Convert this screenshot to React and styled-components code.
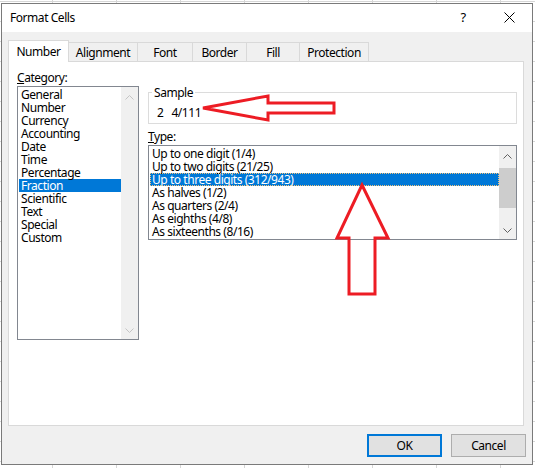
import React from 'react';
import styled, { createGlobalStyle } from 'styled-components';

const Global = createGlobalStyle`
  html, body { margin: 0; padding: 0; }
  body { width: 535px; height: 468px; overflow: hidden; background: #fff; }
`;

const CATEGORIES = ['General', 'Number', 'Currency', 'Accounting', 'Date', 'Time', 'Percentage', 'Fraction', 'Scientific', 'Text', 'Special', 'Custom'];
const TYPES = ['Up to one digit (1/4)', 'Up to two digits (21/25)', 'Up to three digits (312/943)', 'As halves (1/2)', 'As quarters (2/4)', 'As eighths (4/8)', 'As sixteenths (8/16)'];
const TABS = [
  { label: 'Number', w: 61 },
  { label: 'Alignment', w: 70 },
  { label: 'Font', w: 56 },
  { label: 'Border', w: 55 },
  { label: 'Fill', w: 54 },
  { label: 'Protection', w: 70 },
];

const Page = styled.div`
  position: relative;
  width: 535px;
  height: 468px;
  box-sizing: border-box;
  padding: 3px 0 0 1px;
  background-color: #fff;
  background-image:
    linear-gradient(to right, #d6d6d6 1px, transparent 1px),
    linear-gradient(to bottom, #d6d6d6 1px, transparent 1px);
  background-size: 64px 20px;
  background-position: 52px 1px;
`;

const Dialog = styled.div`
  width: 532px;
  height: 462px;
  box-sizing: border-box;
  border: 1px solid #7a7a7a;
  background: #f0f0f0;
  display: flex;
  flex-direction: column;
  font-family: "Noto Sans", sans-serif;
  font-size: 12px;
  letter-spacing: -0.45px;
  color: #000;
`;

const TitleBar = styled.div`
  height: 28px;
  background: #fff;
  display: flex;
  align-items: center;
  padding-left: 8px;
`;

const Title = styled.div`
  flex: 1;
  line-height: 15px;
  margin-top: -2px;
`;

const CaptionButton = styled.div`
  width: 46px;
  height: 28px;
  display: flex;
  align-items: center;
  justify-content: center;
  font-size: 13px;
  margin-top: -2px;
`;

const Client = styled.div`
  flex: 1;
  display: flex;
  flex-direction: column;
  padding: 8px 6px 7px 6px;
`;

const TabRow = styled.div`
  display: flex;
  align-items: flex-end;
  height: 22px;
  margin-bottom: -1px;
  position: relative;
  z-index: 1;
`;

const Tab = styled.div`
  box-sizing: border-box;
  width: ${p => p.$w}px;
  height: ${p => (p.$active ? 22 : 19)}px;
  margin-bottom: ${p => (p.$active ? 0 : 1)}px;
  margin-left: -1px;
  &:first-child { margin-left: 0; }
  border: 1px solid #d9d9d9;
  border-bottom: none;
  background: ${p => (p.$active ? '#fff' : '#f0f0f0')};
  display: flex;
  align-items: center;
  justify-content: center;
  padding-top: ${p => (p.$active ? 0 : 1)}px;
  position: relative;
  z-index: ${p => (p.$active ? 2 : 1)};
`;

const Panel = styled.div`
  width: 516px;
  height: 365px;
  box-sizing: border-box;
  border: 1px solid #d9d9d9;
  background: #fff;
  display: grid;
  grid-template-columns: 122px 369px;
  column-gap: 9px;
  align-items: start;
  padding: 8px 0 0 8px;
`;

const Column = styled.div`
  display: flex;
  flex-direction: column;
  padding-top: ${p => p.$top || 0}px;
`;

const Label = styled.div`
  height: 15px;
  line-height: 15px;
  margin-top: ${p => p.$mt || 0}px;
`;

const ListBox = styled.div`
  box-sizing: border-box;
  height: ${p => p.$h}px;
  margin-top: 1px;
  border: 1px solid #828790;
  background: #fff;
  display: flex;
`;

const Items = styled.div`
  flex: 1;
  padding: 1px 0 0 1px;
  min-width: 0;
`;

const Item = styled.div`
  height: 13px;
  line-height: 13px;
  padding-left: 2px;
  white-space: nowrap;
  background: ${p => (p.$sel ? '#0078d7' : 'transparent')};
  color: ${p => (p.$sel ? '#fff' : '#000')};
  ${p => p.$focus && 'outline: 1px dotted #f3c27a; outline-offset: -1px;'}
`;

const ScrollBar = styled.div`
  width: 17px;
  background: #f0f0f0;
  display: flex;
  flex-direction: column;
`;

const ScrollButton = styled.div`
  height: 17px;
  display: flex;
  justify-content: center;
  align-items: center;
  padding-top: ${p => (p.$up ? 3 : 0)}px;
  box-sizing: border-box;
  color: ${p => (p.$disabled ? '#c4c4c4' : '#606060')};
`;

const Track = styled.div`
  flex: 1;
`;

const Thumb = styled.div`
  height: 40px;
  margin-top: 5px;
  background: #cdcdcd;
`;

const Group = styled.fieldset`
  margin: 0;
  padding: 5px 0 3px 3px;
  border: 1px solid #dcdcdc;
  min-width: 0;
`;

const Legend = styled.legend`
  padding: 0 2px;
  line-height: 15px;
`;

const SampleValue = styled.div`
  padding-left: 5px;
  line-height: 15px;
  white-space: pre;
`;

const Footer = styled.div`
  margin-top: 8px;
  display: flex;
  justify-content: flex-end;
  gap: 9px;
`;

const Button = styled.button`
  width: 75px;
  height: 23px;
  box-sizing: border-box;
  padding: 0;
  background: #e1e1e1;
  border: ${p => (p.$default ? '2px solid #0078d7' : '1px solid #adadad')};
  font: inherit;
  letter-spacing: inherit;
  color: #000;
`;

const Overlay = styled.svg`
  position: absolute;
  left: 0;
  top: 0;
  pointer-events: none;
`;

const Chevron = ({ up }) => (
  <svg width="9" height="5" viewBox="0 0 9 5">
    <path d={up ? 'M0.5 4.5 L4.5 0.5 L8.5 4.5' : 'M0.5 0.5 L4.5 4.5 L8.5 0.5'} fill="none" stroke="currentColor" strokeWidth="1" />
  </svg>
);

function List({ items, selected, height, disabled, focus }) {
  return (
    <ListBox $h={height}>
      <Items>
        {items.map(t => (
          <Item key={t} $sel={t === selected} $focus={focus && t === selected}>{t}</Item>
        ))}
      </Items>
      <ScrollBar>
        <ScrollButton $up $disabled={disabled}><Chevron up /></ScrollButton>
        <Track>{!disabled && <Thumb />}</Track>
        <ScrollButton $disabled={disabled}><Chevron /></ScrollButton>
      </ScrollBar>
    </ListBox>
  );
}

export default function App() {
  return (
    <Page>
      <Global />
      <Dialog>
        <TitleBar>
          <Title>Format Cells</Title>
          <CaptionButton>?</CaptionButton>
          <CaptionButton>
            <svg width="11" height="11" viewBox="0 0 11 11">
              <path d="M0.5 0.5 L10.5 10.5 M10.5 0.5 L0.5 10.5" stroke="#000" strokeWidth="1" />
            </svg>
          </CaptionButton>
        </TitleBar>
        <Client>
          <TabRow>
            {TABS.map((t, i) => (
              <Tab key={t.label} $w={t.w} $active={i === 0}>{t.label}</Tab>
            ))}
          </TabRow>
          <Panel>
            <Column>
              <Label><u>C</u>ategory:</Label>
              <List items={CATEGORIES} selected="Fraction" height={254} disabled />
            </Column>
            <Column $top={15}>
              <Group>
                <Legend>Sample</Legend>
                <SampleValue>{'2   4/111'}</SampleValue>
              </Group>
              <Label $mt={5}><u>T</u>ype:</Label>
              <List items={TYPES} selected="Up to three digits (312/943)" height={95} focus />
            </Column>
          </Panel>
          <Footer>
            <Button $default>OK</Button>
            <Button>Cancel</Button>
          </Footer>
        </Client>
      </Dialog>
      <Overlay width="535" height="468" viewBox="0 0 535 468">
        <polygon points="203,108 268,96 268,103 334,103 334,113 268,113 268,120" fill="none" stroke="#ed1c24" strokeWidth="3" />
        <polygon points="362,185 388,238 375,238 375,294 349,294 349,238 337,238" fill="none" stroke="#ed1c24" strokeWidth="3" />
      </Overlay>
    </Page>
  );
}
